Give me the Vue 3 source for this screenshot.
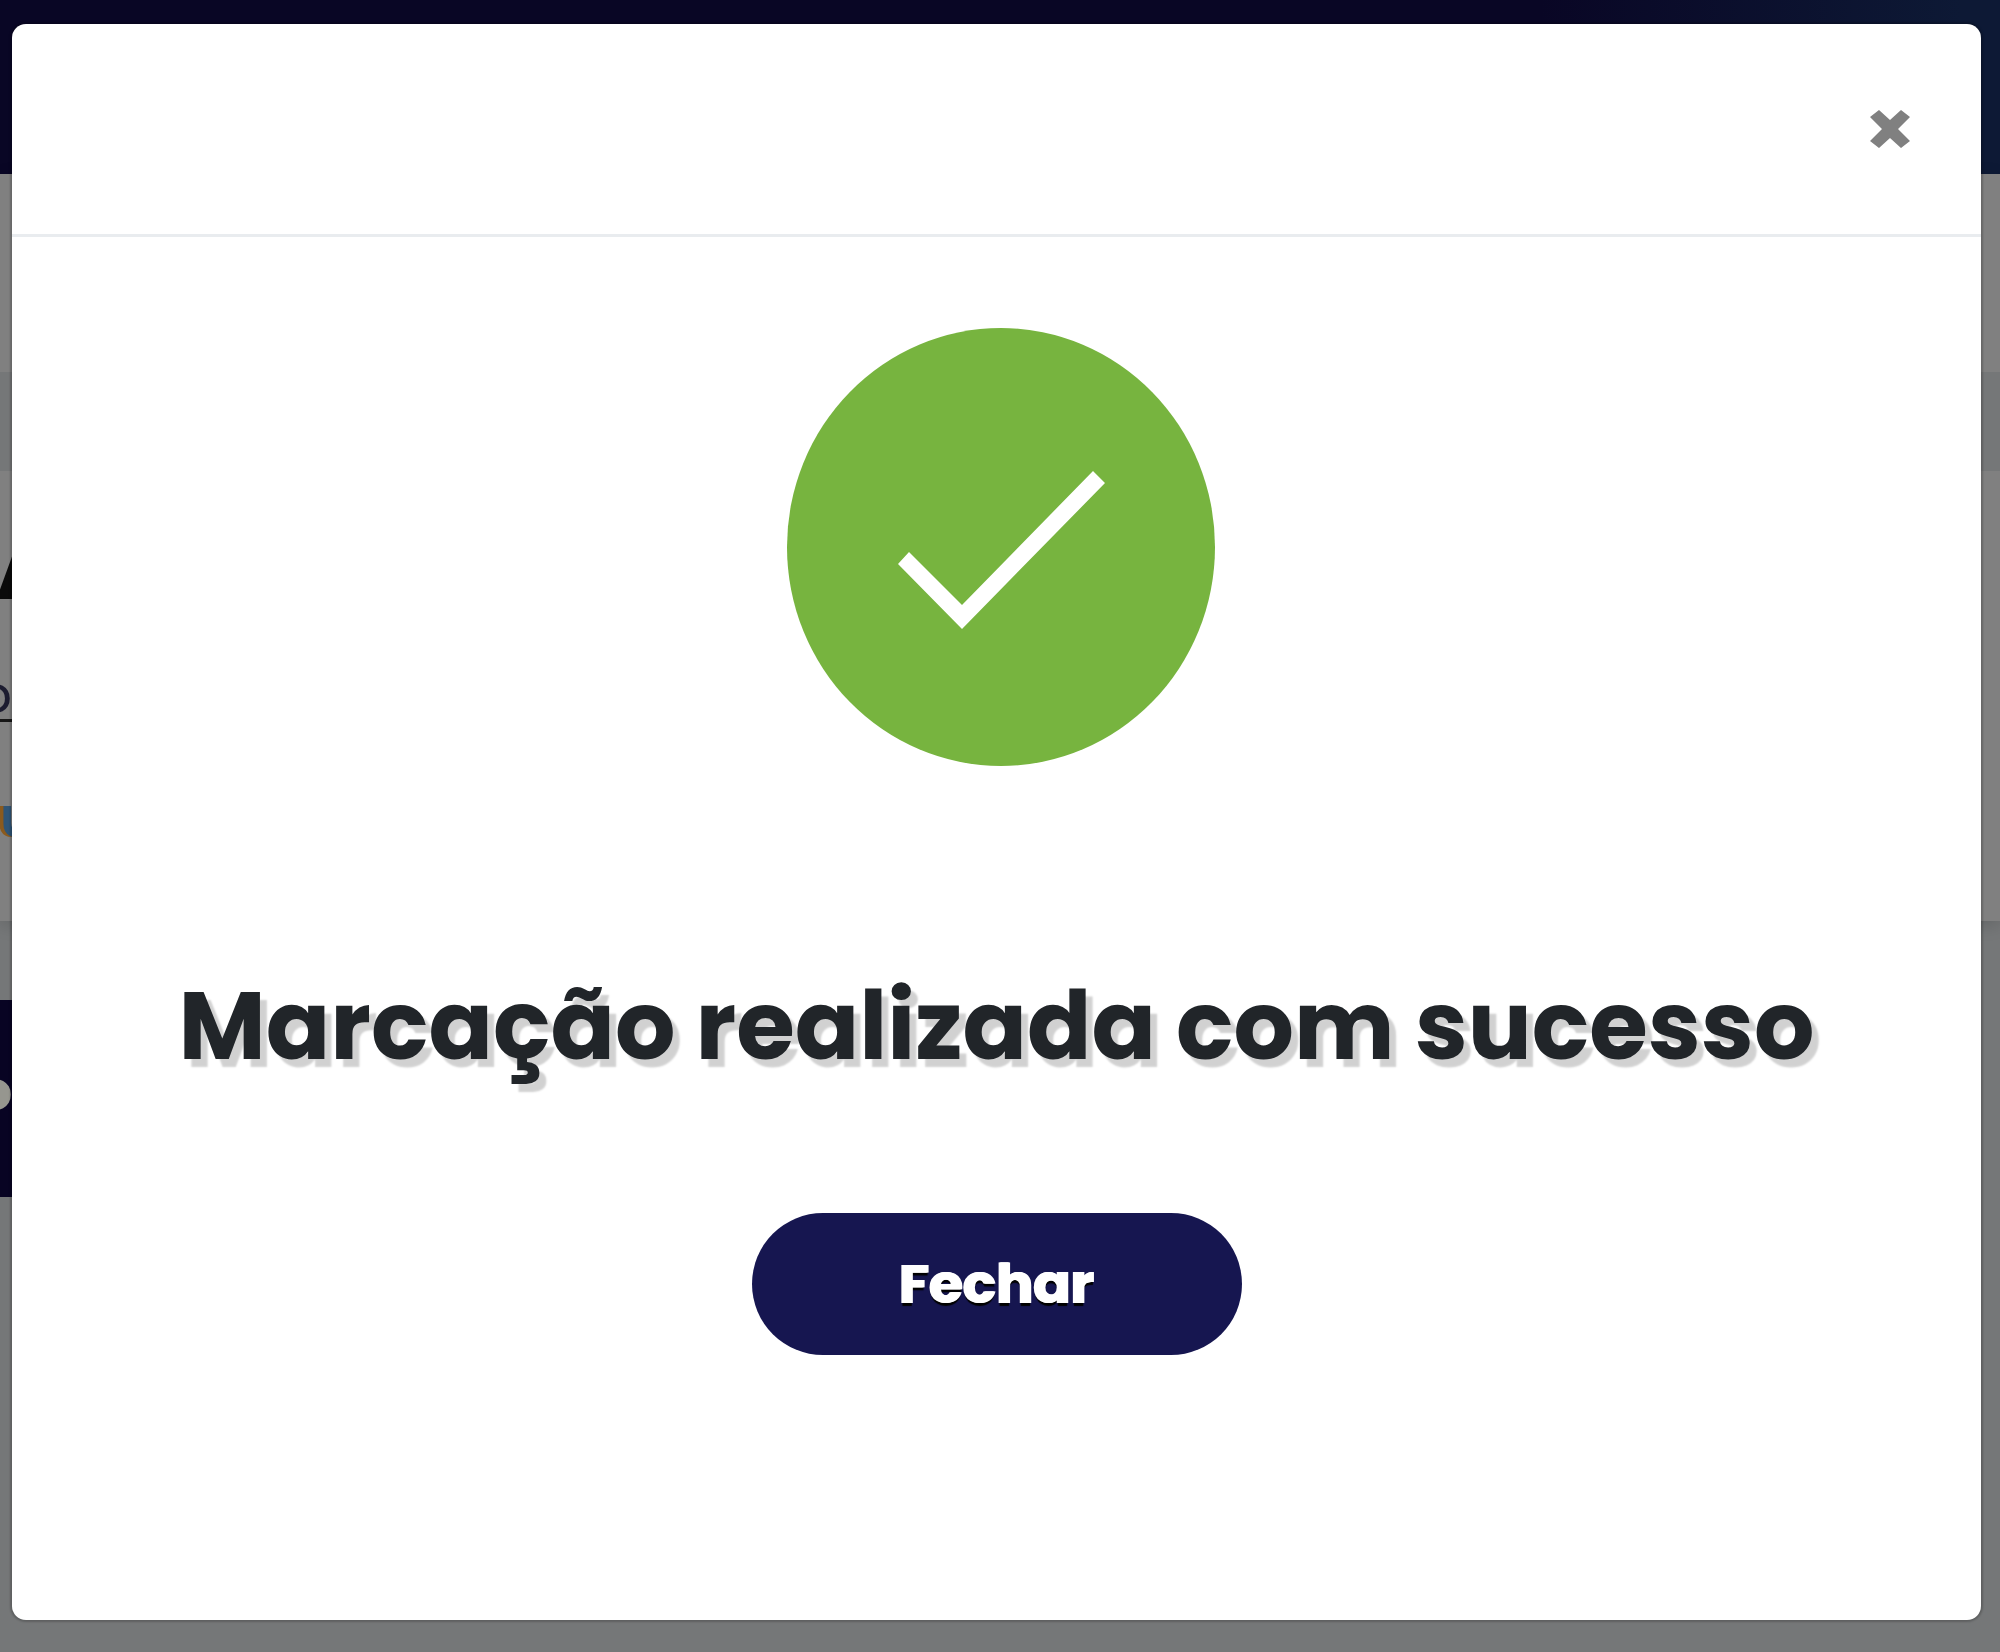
<script setup>
import { ref } from 'vue'

const open = ref(true)
const close = () => { open.value = false }
</script>

<template>
  <div class="screen">
    <div class="page" aria-hidden="true">
      <div class="topbar"></div>
      <div class="card">
        <div class="band"></div>
        <p class="name">A</p>
        <p class="number">o</p>
        <p class="status">u</p>
      </div>
      <div class="action">o</div>
    </div>
    <div v-if="open" class="modal" role="dialog" aria-modal="true" aria-labelledby="modal-title">
      <header class="modal-header">
        <button class="close" type="button" aria-label="Close" @click="close">
          <svg viewBox="0 0 42 40" width="42" height="40" aria-hidden="true">
            <path d="M10 1 L21 11 L32 1 L41 8 L29 20 L41 32 L32 39 L21 29 L10 39 L1 32 L13 20 L1 8 Z" fill="#808080" />
          </svg>
        </button>
      </header>
      <div class="modal-body">
        <svg class="success" viewBox="0 0 428 438" aria-hidden="true">
          <ellipse cx="214" cy="219" rx="214" ry="219" fill="#77b43f" />
          <path d="M111 236 L122 224 L175 277 L306 143 L318 155 L175 301 Z" fill="#fff" />
        </svg>
        <h1 id="modal-title" class="title">Marcação realizada com sucesso</h1>
        <button class="confirm" type="button" @click="close">Fechar</button>
      </div>
    </div>
  </div>
</template>

<style>
body {
  margin: 0;
}
</style>

<style scoped>
.screen {
  position: relative;
  box-sizing: border-box;
  min-height: 100vh;
  padding: 24px 19px 32px 12px;
  overflow: hidden;
  background: #757778;
  font-family: Poppins, Inter, "Liberation Sans", sans-serif;
}

.page {
  position: absolute;
  inset: 0;
  overflow: hidden;
}

.topbar {
  height: 174px;
  background: linear-gradient(90deg, #090625 77%, #0d1935 98%);
}

.card {
  height: 747px;
  background: #808080;
  box-shadow: 0 4px 16px rgba(0, 0, 0, 0.15);
  padding-top: 198px;
  box-sizing: border-box;
}

.band {
  height: 99px;
  background: #757778;
}

.name,
.number,
.status,
.action {
  display: flex;
  width: 12px;
  margin: 0;
}

.name {
  margin: 47px 0 0 -5px;
  color: #0a0a0a;
  font-size: 96px;
  font-weight: 700;
  line-height: 96px;
}

.number {
  justify-content: flex-end;
  margin-top: 57px;
  border-bottom: 3px solid #161616;
  color: #1c1c30;
  font-size: 52px;
  line-height: 48px;
}

.status {
  margin: 72px 0 0;
  color: #2f5577;
  font-size: 54px;
  font-weight: 600;
  line-height: 48px;
  text-shadow: -4px 0 #8a5a1e;
}

.action {
  box-sizing: border-box;
  height: 197px;
  justify-content: flex-end;
  margin-top: 79px;
  background: #080423;
  color: #96968f;
  font-size: 54px;
  font-weight: 800;
  line-height: 183px;
}

.modal {
  position: relative;
  display: flex;
  flex-direction: column;
  box-sizing: border-box;
  min-height: calc(100vh - 56px);
  border-radius: 14px;
  background: #fff;
  box-shadow: 0 0 2px 2px rgba(0, 0, 0, 0.2);
}

.modal-header {
  display: flex;
  justify-content: flex-end;
  padding: 69px 54px;
  border-bottom: 3px solid #e9ecef;
}

.close {
  display: flex;
  padding: 16px;
  border: 0;
  background: none;
  cursor: pointer;
}

.modal-body {
  display: flex;
  flex-direction: column;
  align-items: center;
  padding: 91px 24px;
}

.success {
  width: 428px;
  height: 438px;
  margin-left: 8px;
}

.title {
  margin: 200px 0 0;
  color: #212529;
  font-size: 95px;
  font-weight: 700;
  line-height: 120px;
  text-align: center;
  text-shadow: 7px 8px 2px rgba(0, 0, 0, 0.18);
}

.confirm {
  width: 490px;
  height: 142px;
  margin-top: 127px;
  padding: 0;
  border: 0;
  border-radius: 71px;
  background: #161650;
  color: #fff;
  font-family: inherit;
  font-size: 55px;
  font-weight: 700;
  line-height: 64px;
  text-shadow: 1px 0 #fff, -1px 0 #fff, 0 3px 1px #000;
  cursor: pointer;
}
</style>
